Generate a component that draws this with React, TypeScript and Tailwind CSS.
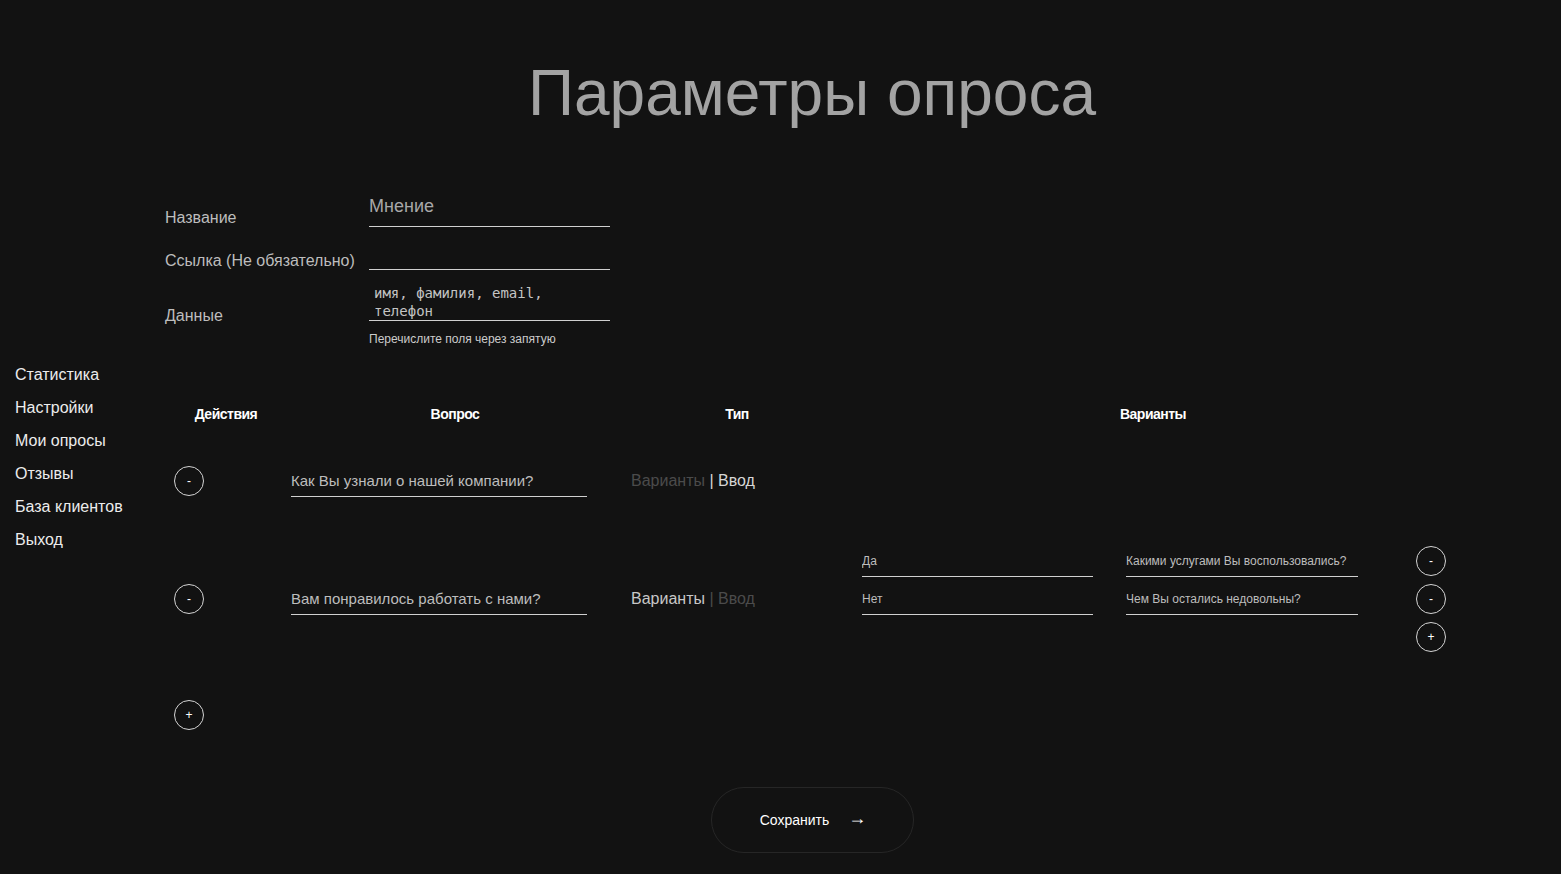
import React from "react";

const sans = { fontFamily: '"Liberation Sans", Arial, sans-serif' };

function Circle({ sign }: { sign: string }) {
  return (
    <button className="w-[30px] h-[30px] rounded-full border border-[#d4d4d4] text-white text-[12px] leading-none flex items-center justify-center shrink-0">
      {sign}
    </button>
  );
}

function UnderInput({
  value,
  className,
}: {
  value: string;
  className: string;
}) {
  return (
    <input
      readOnly
      value={value}
      className={`h-[31px] border-b border-[#d0d0d0] bg-transparent outline-none ${className}`}
    />
  );
}

const navItems = ["Статистика", "Настройки", "Мои опросы", "Отзывы", "База клиентов", "Выход"];

export default function App() {
  return (
    <div className="min-h-screen bg-[#121212] flex" style={sans}>
      <aside className="w-[150px] shrink-0 pl-[15px] pt-[364px]">
        <nav className="flex flex-col gap-[11px]">
          {navItems.map((item) => (
            <a key={item} className="text-[16px] leading-[22px] text-[#ececec] cursor-pointer">
              {item}
            </a>
          ))}
        </nav>
      </aside>

      <main className="w-[1324px] shrink-0 flex flex-col">
        <h1 className="pt-[61px] text-center text-[64px] leading-none text-[#a3a3a3]">
          Параметры опроса
        </h1>

        {/* form */}
        <div className="ml-[15px] mt-[61px] flex flex-col">
          <div className="flex items-end">
            <label className="w-[204px] text-[16px] leading-[22px] text-[#bdbdbd] mb-[-2px]">Название</label>
            <input
              readOnly
              value="Мнение"
              className="w-[241px] h-[41px] border-b border-[#d0d0d0] bg-transparent outline-none text-[18px] text-[#a8a8a8]"
            />
          </div>
          <div className="flex items-end mt-[2px]">
            <label className="w-[204px] text-[16px] leading-[22px] text-[#bdbdbd] mb-[-2px]">
              Ссылка (Не обязательно)
            </label>
            <input
              readOnly
              value=""
              className="w-[241px] h-[41px] border-b border-[#d0d0d0] bg-transparent outline-none"
            />
          </div>
          <div className="flex items-end mt-[12px]">
            <label className="w-[204px] text-[16px] leading-[22px] text-[#bdbdbd] mb-[-6px]">Данные</label>
            <textarea
              readOnly
              value="имя, фамилия, email, телефон"
              className="w-[241px] h-[39px] pt-[2px] pl-[5px] pr-[10px] border-b border-[#d0d0d0] bg-transparent outline-none resize-none overflow-hidden text-[14px] leading-[18px] text-[#c4c4c4]"
              style={{ fontFamily: '"DejaVu Sans Mono", monospace' }}
            />
          </div>
          <p className="ml-[204px] mt-[10px] text-[12px] leading-[16px] text-[#cccccc]">
            Перечислите поля через запятую
          </p>
        </div>

        {/* questions table */}
        <div className="ml-[15px] mt-[57px] flex flex-col">
          <div className="grid grid-cols-[122px_336px_228px_604px] h-[20px] items-center text-[14px] tracking-[-0.5px] font-bold text-white text-center">
            <div>Действия</div>
            <div>Вопрос</div>
            <div>Тип</div>
            <div>Варианты</div>
          </div>

          <div className="grid grid-cols-[122px_336px_228px_604px] mt-[17px] h-[80px] items-center">
            <div className="pl-[9px]">
              <Circle sign="-" />
            </div>
            <div className="pl-[4px]">
              <UnderInput value="Как Вы узнали о нашей компании?" className="w-[296px] text-[15px] text-[#bdbdbd]" />
            </div>
            <div className="pl-[8px] text-[16px] text-[#d6d6d6]">
              <span className="text-[#4b4b4b]">Варианты</span> | Ввод
            </div>
            <div />
          </div>

          <div className="grid grid-cols-[122px_336px_228px_604px] mt-[21px] h-[114px] items-center">
            <div className="pl-[9px]">
              <Circle sign="-" />
            </div>
            <div className="pl-[4px]">
              <UnderInput value="Вам понравилось работать с нами?" className="w-[296px] text-[15px] text-[#bdbdbd]" />
            </div>
            <div className="pl-[8px] text-[16px] text-[#4b4b4b]">
              <span className="text-[#c8c8c8]">Варианты</span> | Ввод
            </div>
            <div className="pl-[11px] flex flex-col">
              {[
                ["Да", "Какими услугами Вы воспользовались?"],
                ["Нет", "Чем Вы остались недовольны?"],
              ].map(([a, b]) => (
                <div key={a} className="h-[38px] flex items-center">
                  <UnderInput value={a} className="w-[231px] text-[12px] text-[#bdbdbd]" />
                  <UnderInput value={b} className="ml-[33px] w-[232px] text-[12px] text-[#bdbdbd]" />
                  <div className="ml-[58px]">
                    <Circle sign="-" />
                  </div>
                </div>
              ))}
              <div className="h-[38px] flex items-center pl-[554px]">
                <Circle sign="+" />
              </div>
            </div>
          </div>

          <div className="mt-[44px] pl-[9px]">
            <Circle sign="+" />
          </div>
        </div>

        <div className="mt-[57px] flex justify-center">
          <button className="w-[203px] h-[66px] rounded-full border border-[#262626] flex items-center justify-center gap-[19px] pl-[2px] text-[14px] text-white">
            <span>Сохранить</span>
            <span className="text-[18px] leading-none pb-[5px]">→</span>
          </button>
        </div>
      </main>
    </div>
  );
}
